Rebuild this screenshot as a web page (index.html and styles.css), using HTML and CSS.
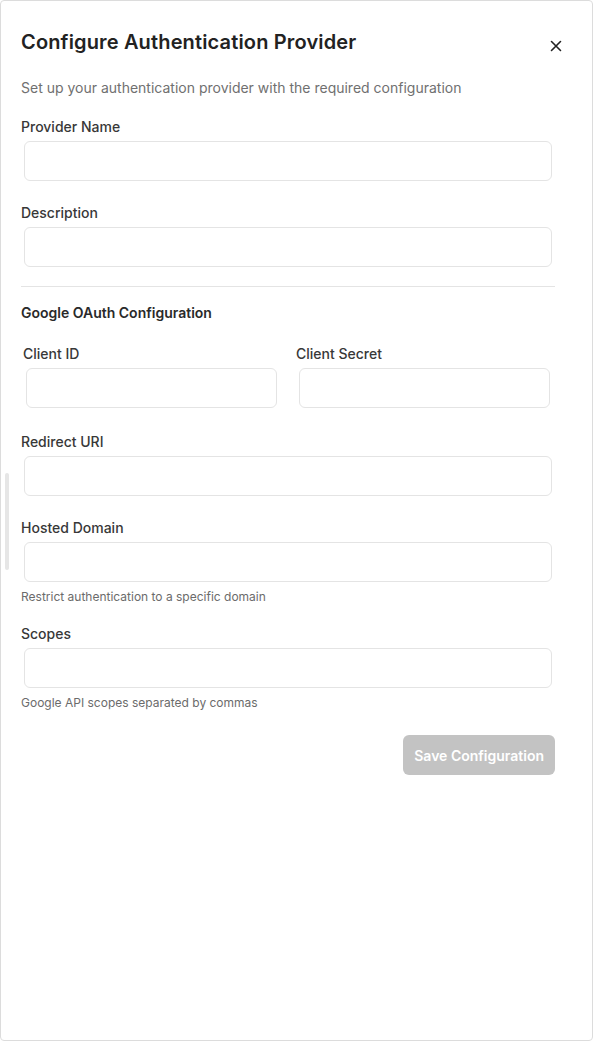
FILE: index.html
```html
<!DOCTYPE html>
<html lang="en">
<head>
    <meta charset="UTF-8">
    <meta name="viewport" content="width=device-width, initial-scale=1.0">
    <title>Configure Authentication Provider</title>
    <link rel="stylesheet" href="styles.css">
</head>
<body>

    <div class="panel">
        <div class="scroll-thumb"></div>

        <div class="header">
            <h1>Configure Authentication Provider</h1>
            <button class="close" aria-label="Close">
                <svg width="12" height="12" viewBox="0 0 12 12">
                    <path d="M1.5 1.5 L10.5 10.5 M10.5 1.5 L1.5 10.5" stroke="#222" stroke-width="1.6" stroke-linecap="round"/>
                </svg>
            </button>
        </div>

        <p class="subtitle">Set up your authentication provider with the required configuration</p>

        <form class="config">
            <div class="field">
                <label>Provider Name</label>
                <input type="text" name="name">
            </div>

            <div class="field">
                <label>Description</label>
                <input type="text" name="description">
            </div>

            <hr>

            <h2>Google OAuth Configuration</h2>

            <div class="row">
                <div class="field">
                    <label>Client ID</label>
                    <input type="text" name="client_id">
                </div>
                <div class="field">
                    <label>Client Secret</label>
                    <input type="text" name="client_secret">
                </div>
            </div>

            <div class="field">
                <label>Redirect URI</label>
                <input type="text" name="redirect_uri">
            </div>

            <div class="field">
                <label>Hosted Domain</label>
                <input type="text" name="hosted_domain">
                <small>Restrict authentication to a specific domain</small>
            </div>

            <div class="field">
                <label>Scopes</label>
                <input type="text" name="scopes">
                <small>Google API scopes separated by commas</small>
            </div>

            <div class="actions">
                <button class="save" disabled>Save Configuration</button>
            </div>
        </form>
    </div>

</body>
</html>
```

FILE: styles.css
```css
* {
    margin: 0;
    padding: 0;
    outline: none;
    box-sizing: border-box;
    font-family: Inter, "Noto Sans", sans-serif;
}

body {
    background-color: #fff;
}

.panel {
    position: relative;
    width: 593px;
    height: 1041px;
    border: 1px solid #dcdcdc;
    border-radius: 4px;
    padding: 0 37px 0 20px;
    background-color: #fff;
}

.scroll-thumb {
    position: absolute;
    left: 4px;
    top: 472px;
    width: 4px;
    height: 97px;
    border-radius: 2px;
    background-color: #e6e6e6;
}

.header {
    display: flex;
    align-items: center;
    justify-content: space-between;
    padding-top: 28px;
}

h1 {
    font-size: 20px;
    font-weight: 600;
    color: #222;
    line-height: 26px;
    letter-spacing: 0.15px;
}

.close {
    border: none;
    background: none;
    width: 14px;
    height: 14px;
    display: flex;
    align-items: center;
    justify-content: center;
    margin-top: 7px;
    margin-right: -8px;
    cursor: pointer;
}

.subtitle {
    margin-top: 23px;
    font-size: 14px;
    line-height: 20px;
    color: #707070;
}

.config {
    display: flex;
    flex-direction: column;
    margin-top: 19px;
}

.field {
    display: flex;
    flex-direction: column;
    margin-bottom: 22px;
}

.field label {
    font-size: 14px;
    line-height: 20px;
    color: #383838;
    font-weight: 500;
    margin-bottom: 4px;
}

.field input {
    height: 40px;
    margin: 0 3px;
    border: 1px solid #e4e4e4;
    border-radius: 6px;
    padding: 0 12px;
    font-size: 14px;
    background-color: #fff;
}

.field small {
    font-size: 12px;
    line-height: 16px;
    color: #6b6b6b;
    margin-top: 7px;
}

.field:has(small) {
    margin-bottom: 19px;
}

hr {
    border: none;
    border-top: 1px solid #e4e4e4;
    margin-top: -3px;
}

h2 {
    font-size: 14px;
    font-weight: 600;
    line-height: 20px;
    color: #2a2a2a;
    margin-top: 16px;
}

.row {
    display: grid;
    grid-template-columns: 1fr 1fr;
    gap: 16px;
    padding: 0 2px;
    margin-top: 21px;
}

.row .field {
    margin-bottom: 0;
}

.row + .field {
    margin-top: 24px;
}

.actions {
    display: flex;
    justify-content: flex-end;
    margin-top: 5px;
}

.save {
    height: 40px;
    padding: 0 11px;
    border: none;
    border-radius: 6px;
    background-color: #c3c3c3;
    color: #fff;
    font-size: 14px;
    font-weight: 600;
}
```
